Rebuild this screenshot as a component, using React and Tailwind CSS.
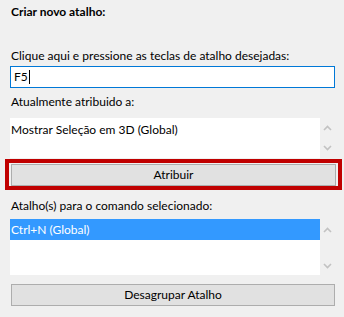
import React from 'react'

const font = { fontFamily: 'Lato, "Liberation Sans", sans-serif' }

const Chevron = ({ up }) => (
  <svg width="9" height="6" viewBox="0 0 9 6" className="block">
    <path
      d={up ? 'M1 5 L4.5 1.5 L8 5' : 'M1 1 L4.5 4.5 L8 1'}
      fill="none"
      stroke="#c2c2c2"
      strokeWidth="1.6"
    />
  </svg>
)

const ScrollBox = ({ height, children, upTop, downBottom }) => (
  <div className="flex ml-[10px] w-[325px]" style={{ height }}>
    <div className="flex-1 bg-white overflow-hidden">{children}</div>
    <div className="w-[15px] flex flex-col items-center justify-between" style={{ paddingTop: upTop, paddingBottom: downBottom }}>
      <Chevron up />
      <Chevron />
    </div>
  </div>
)

const App = () => {
  return (
    <div className="w-[344px] h-[317px] bg-[#f0f0f0] text-[12px] text-black overflow-hidden" style={font}>
      <div className="pt-[5px] pl-[11px] h-[20px] leading-[14px] font-bold">Criar novo atalho:</div>

      <div className="mt-[29px] pl-[11px] leading-[14px]">Clique aqui e pressione as teclas de atalho desejadas:</div>
      <div className="mt-[3px] ml-[10px] w-[325px] h-[22px] bg-white border border-[#0078d7] flex items-center pl-[3px] leading-none">
        F5<span className="inline-block w-px h-[14px] bg-black ml-px"></span>
      </div>

      <div className="mt-[7px] pl-[11px] leading-[14px]">Atualmente atribuido a:</div>
      <div className="mt-[9px]">
        <ScrollBox height={40} upTop={7} downBottom={7}>
          <div className="pl-[1px] pt-[5px] leading-[14px]">Mostrar Seleção em 3D (Global)</div>
        </ScrollBox>
      </div>

      <div className="mt-px ml-[5px] w-[337px] h-[31px] border-[4px] border-[#c00000] pl-[2px] pt-[1px]">
        <button className="w-[325px] h-[22px] bg-[#e1e1e1] border border-[#adadad] leading-none">Atribuir</button>
      </div>

      <div className="mt-[9px] pl-[11px] leading-[14px]">Atalho(s) para o comando selecionado:</div>
      <div className="mt-[6px]">
        <ScrollBox height={56} upTop={8} downBottom={6}>
          <div className="h-[21px] bg-[#3399ff] text-white pl-[1px] flex items-center leading-none">Ctrl+N (Global)</div>
        </ScrollBox>
      </div>

      <div className="mt-[9px] ml-[11px]">
        <button className="w-[324px] h-[22px] bg-[#e1e1e1] border border-[#adadad] leading-none">Desagrupar Atalho</button>
      </div>
    </div>
  )
}

export default App
